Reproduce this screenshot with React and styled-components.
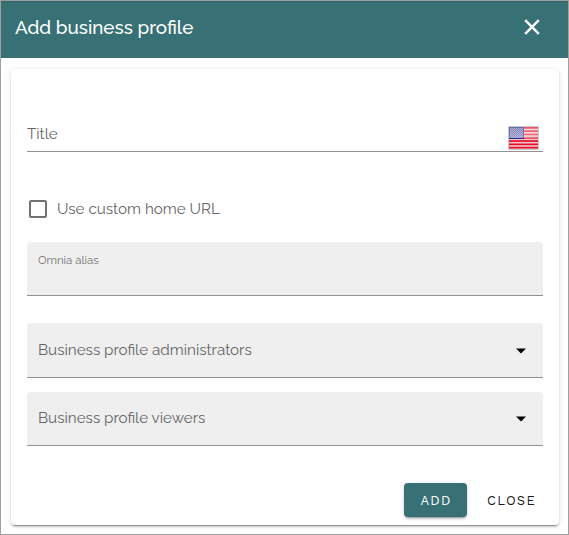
import React from 'react';
import styled, { createGlobalStyle } from 'styled-components';

const GlobalStyle = createGlobalStyle`
  * { box-sizing: border-box; }
  body { margin: 0; background: #fff; }
`;

const Dialog = styled.div`
  width: 569px;
  height: 535px;
  display: flex;
  flex-direction: column;
  border: 1px solid #a0a0a0;
  background: #fff;
  font-family: Raleway, Lato, sans-serif;
  overflow: hidden;
`;

const Header = styled.header`
  height: 57px;
  flex: none;
  display: flex;
  align-items: center;
  justify-content: space-between;
  padding: 0 28px 5px 14px;
  background: #387175;
  box-shadow: inset 0 2px 2px -1px rgba(0, 0, 0, 0.15);
  color: #fff;
`;

const Heading = styled.h1`
  margin: 0;
  font-size: 18.8px;
  line-height: 24px;
  font-weight: 500;
  white-space: nowrap;
`;

const IconButton = styled.button`
  display: flex;
  padding: 0;
  border: 0;
  background: none;
  color: inherit;
`;

const Card = styled.main`
  width: 548px;
  height: 456px;
  margin: 11px 0 0 10px;
  padding: 47px 16px 8px;
  display: flex;
  flex-direction: column;
  border-radius: 4px;
  background: #fff;
  box-shadow: 0 3px 1px -2px rgba(0, 0, 0, 0.3), 0 2px 2px 0 rgba(0, 0, 0, 0.14),
    0 1px 5px 0 rgba(0, 0, 0, 0.12);
`;

const TitleField = styled.div`
  height: 36px;
  display: flex;
  align-items: flex-start;
  justify-content: space-between;
  padding: 9px 4px 0 0;
  border-bottom: 1px solid #929292;
`;

const Label = styled.span`
  font-size: ${(p) => (p.$small ? '11.4px' : '15.2px')};
  line-height: ${(p) => (p.$small ? '14px' : '18px')};
  color: ${(p) => (p.$small ? '#707070' : '#666')};
  white-space: nowrap;
`;

const CheckRow = styled.label`
  height: 24px;
  margin: 45px 0 21px 2px;
  display: flex;
  align-items: center;
  gap: 10px;
`;

const CheckBox = styled.span`
  width: 18px;
  height: 18px;
  border: 2px solid #727272;
  border-radius: 2px;
`;

const Field = styled.div`
  height: ${(p) => p.$height}px;
  margin-top: ${(p) => p.$gap || 0}px;
  padding: ${(p) => p.$top}px 17px 0 11px;
  display: flex;
  align-items: flex-start;
  justify-content: space-between;
  border-bottom: 1px solid #929292;
  border-radius: 4px 4px 0 0;
  background: #efefef;
`;

const Caret = styled.svg`
  margin-top: 7px;
`;

const Actions = styled.footer`
  margin-top: auto;
  display: flex;
  justify-content: flex-end;
`;

const Button = styled.button`
  width: ${(p) => (p.$primary ? 63 : 76)}px;
  height: 34px;
  margin-right: ${(p) => (p.$primary ? 6 : -6)}px;
  padding: 1px 0 0 1px;
  border: 0;
  border-radius: 4px;
  background: ${(p) => (p.$primary ? '#387175' : 'transparent')};
  box-shadow: ${(p) =>
    p.$primary ? '0 3px 1px -2px rgba(0,0,0,.2), 0 2px 2px rgba(0,0,0,.14), 0 1px 5px rgba(0,0,0,.12)' : 'none'};
  color: ${(p) => (p.$primary ? '#fff' : '#1c1c1c')};
  font: 400 13px/34px 'Work Sans', Inter, sans-serif;
  letter-spacing: 1.25px;
`;

const CloseIcon = () => (
  <svg width="16" height="16" viewBox="0 0 16 16" fill="none" stroke="currentColor" strokeWidth="2.4">
    <path d="M1.2 1.2 14.8 14.8M14.8 1.2 1.2 14.8" />
  </svg>
);

const DropArrow = () => (
  <Caret width="11" height="6" viewBox="0 0 11 6">
    <path d="M1 .5h10l-5 5z" fill="#000" />
  </Caret>
);

const FlagIcon = styled.svg`
  margin-top: 1px;
`;

const Flag = () => (
  <FlagIcon width="31" height="24" viewBox="0 0 31 24">
    <defs>
      <linearGradient id="gloss" x1="0" y1="0" x2="0" y2="1">
        <stop offset="0" stopColor="#fff" stopOpacity=".3" />
        <stop offset="1" stopColor="#fff" stopOpacity=".42" />
      </linearGradient>
      <pattern id="stars" width="2" height="2" patternUnits="userSpaceOnUse">
        <rect width="1" height="1" fill="#8585c0" />
        <rect x="1" y="1" width="1" height="1" fill="#8585c0" />
      </pattern>
    </defs>
    <rect width="31" height="24" rx="1" fill="#c9c9c9" />
    <rect x="1" y="1" width="29" height="21.5" fill="#f8c4ca" />
    {Array.from({ length: 7 }, (_, i) => (
      <rect key={i} x="1" y={1 + i * 3.3} width="29" height="1.7" fill="#e0102a" />
    ))}
    <rect x="1" y="1" width="15" height="12" fill="#28288a" />
    <rect x="2" y="2" width="13" height="10" fill="#4d4da3" />
    <rect x="2" y="2" width="13" height="10" fill="url(#stars)" />
    <rect x="1" y="1" width="29" height="11" fill="url(#gloss)" />
  </FlagIcon>
);

export default function App() {
  return (
    <>
      <GlobalStyle />
      <Dialog>
        <Header>
          <Heading>Add business profile</Heading>
          <IconButton aria-label="Close dialog">
            <CloseIcon />
          </IconButton>
        </Header>
        <Card>
          <TitleField>
            <Label>Title</Label>
            <Flag />
          </TitleField>
          <CheckRow>
            <CheckBox />
            <Label>Use custom home URL</Label>
          </CheckRow>
          <Field $height={54} $top={11}>
            <Label $small>Omnia alias</Label>
          </Field>
          <Field $height={55} $gap={27} $top={18}>
            <Label>Business profile administrators</Label>
            <DropArrow />
          </Field>
          <Field $height={54} $gap={14} $top={17}>
            <Label>Business profile viewers</Label>
            <DropArrow />
          </Field>
          <Actions>
            <Button $primary>ADD</Button>
            <Button>CLOSE</Button>
          </Actions>
        </Card>
      </Dialog>
    </>
  );
}
